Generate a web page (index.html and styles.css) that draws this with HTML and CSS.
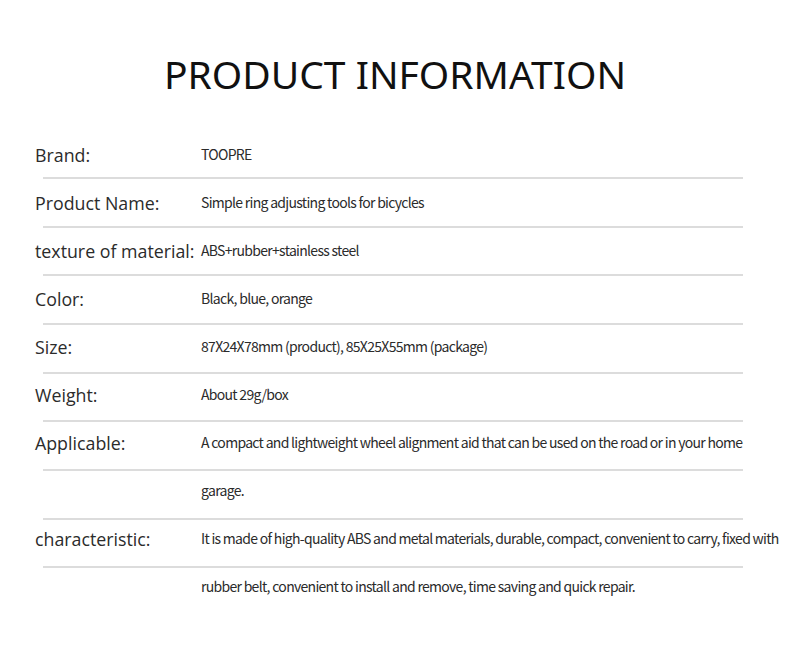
FILE: index.html
```html
<!DOCTYPE html>
<html lang="en">
<head>
<meta charset="utf-8">
<title>Product Information</title>
<link rel="stylesheet" href="styles.css">
</head>
<body>
<main class="page">
  <h1 class="title">PRODUCT INFORMATION</h1>
  <div class="table">
    <div class="row"><div class="label">Brand:</div><div class="value">TOOPRE</div></div>
    <div class="row"><div class="label">Product Name:</div><div class="value">Simple ring adjusting tools for bicycles</div></div>
    <div class="row"><div class="label">texture of material:</div><div class="value">ABS+rubber+stainless steel</div></div>
    <div class="row"><div class="label">Color:</div><div class="value">Black, blue, orange</div></div>
    <div class="row"><div class="label">Size:</div><div class="value">87X24X78mm (product), 85X25X55mm (package)</div></div>
    <div class="row"><div class="label">Weight:</div><div class="value">About 29g/box</div></div>
    <div class="row"><div class="label">Applicable:</div><div class="value">A compact and lightweight wheel alignment aid that can be used on the road or in your home</div></div>
    <div class="row"><div class="label"></div><div class="value">garage.</div></div>
    <div class="row"><div class="label">characteristic:</div><div class="value">It is made of high-quality ABS and metal materials, durable, compact, convenient to carry, fixed with</div></div>
    <div class="row last"><div class="label"></div><div class="value">rubber belt, convenient to install and remove, time saving and quick repair.</div></div>
  </div>
</main>
</body>
</html>
```

FILE: styles.css
```css
html, body {
  margin: 0;
  padding: 0;
  background: #ffffff;
}
.page {
  width: 790px;
  height: 650px;
  overflow: hidden;
}
.title {
  margin: 0;
  padding-top: 49px;
  height: 130.5px;
  box-sizing: border-box;
  text-align: center;
  font-family: "Noto Sans", sans-serif;
  font-weight: 400;
  font-size: 39px;
  line-height: 50px;
  color: #111111;
}
.table {
  display: flex;
  flex-direction: column;
}
.row {
  display: flex;
  align-items: flex-start;
  height: 48.65px;
  box-sizing: border-box;
  margin: 0 47px 0 43px;
  border-bottom: 2px solid #dcdcdc;
  padding-top: 13.5px;
}
.row:nth-child(2) { padding-top: 12.85px; }
.row:nth-child(3) { padding-top: 12.2px; }
.row:nth-child(4) { padding-top: 11.55px; }
.row:nth-child(5) { padding-top: 10.9px; }
.row:nth-child(6) { padding-top: 10.25px; }
.row:nth-child(7) { padding-top: 9.6px; }
.row:nth-child(8) { padding-top: 8.95px; }
.row:nth-child(9) { padding-top: 8.3px; }
.row:nth-child(10) { padding-top: 7.65px; }
.row.last {
  border-bottom-color: transparent;
}
.label {
  margin-left: -8px;
  padding-top: 1px;
  width: 166px;
  flex: none;
  font-family: "Open Sans", sans-serif;
  font-size: 17.8px;
  line-height: 20px;
  color: #2b2b2b;
  white-space: nowrap;
}
.value {
  font-family: "Noto Sans CJK SC", "Noto Sans", sans-serif;
  font-size: 14px;
  line-height: 20px;
  letter-spacing: -0.7px;
  color: #2b2b2b;
  white-space: nowrap;
}
```
